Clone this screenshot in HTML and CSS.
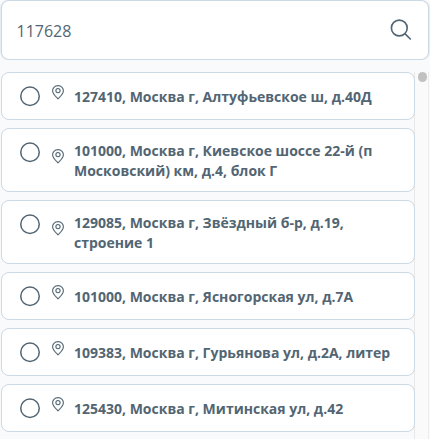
FILE: index.html
```html
<!DOCTYPE html>
<html lang="ru">
<head>
<meta charset="utf-8">
<title>Адреса</title>
<link rel="stylesheet" href="styles.css">
</head>
<body>
<svg class="defs" width="0" height="0">
  <symbol id="radio" viewBox="0 0 20 20"><circle cx="10" cy="10.300" r="9.250"/></symbol>
  <symbol id="pin" viewBox="0 0 12 15">
    <path d="M6 .6C3 .6.6 3 .6 5.8.6 9 3.600 11.500 6 13.800 8.400 11.500 11.400 9 11.400 5.800 11.400 3 9 .6 6 .6Z"/>
    <circle cx="6" cy="5.600" r="2.100"/>
  </symbol>
</svg>
<div class="search">
  <span class="query">117628</span>
  <svg class="search-icon" viewBox="0 0 22 22"><circle cx="9.300" cy="9" r="7.900"/><path d="M14.900 14.600 20.800 20.500"/></svg>
</div>
<div class="results">
  <div class="list">
    <label class="card"><svg class="radio"><use href="#radio"/></svg><svg class="pin"><use href="#pin"/></svg><span class="address">127410, Москва г, Алтуфьевское ш, д.40Д</span></label>
    <label class="card tall"><svg class="radio"><use href="#radio"/></svg><svg class="pin"><use href="#pin"/></svg><span class="address">101000, Москва г, Киевское шоссе 22-й (п<br>Московский) км, д.4, блок Г</span></label>
    <label class="card tall"><svg class="radio"><use href="#radio"/></svg><svg class="pin"><use href="#pin"/></svg><span class="address">129085, Москва г, Звёздный б-р, д.19,<br>строение 1</span></label>
    <label class="card"><svg class="radio"><use href="#radio"/></svg><svg class="pin"><use href="#pin"/></svg><span class="address">101000, Москва г, Ясногорская ул, д.7А</span></label>
    <label class="card"><svg class="radio"><use href="#radio"/></svg><svg class="pin"><use href="#pin"/></svg><span class="address">109383, Москва г, Гурьянова ул, д.2А, литер</span></label>
    <label class="card"><svg class="radio"><use href="#radio"/></svg><svg class="pin"><use href="#pin"/></svg><span class="address">125430, Москва г, Митинская ул, д.42</span></label>
  </div>
  <div class="scrollbar"><div class="thumb"></div></div>
</div>
</body>
</html>
```

FILE: styles.css
```css
* { box-sizing: border-box; }
body {
  margin: 0;
  height: 439px;
  overflow: hidden;
  display: flex;
  flex-direction: column;
  gap: 12px;
  padding-left: 1px;
  background: #f9fafc;
  color: #526573;
  font-family: "Open Sans", "Noto Sans", sans-serif;
}
.defs { position: absolute; }
.search {
  display: flex;
  flex: none;
  justify-content: space-between;
  align-items: center;
  width: 428px;
  height: 60px;
  padding: 0 16px 0 14.5px;
  border: 1px solid #cbd9e4;
  border-radius: 8px;
  background: #fff;
  box-shadow: -1px 0 #e6ecf1, 1px 0 #e6ecf1;
}
.query { font-size: 16px; line-height: 24px; padding-top: 1px; }
.search-icon {
  width: 22px;
  height: 22px;
  fill: none;
  stroke: #526573;
  stroke-width: 1.6;
}
.results { display: flex; flex: 1; min-height: 0; }
.list { display: flex; flex-direction: column; gap: 8px; width: 414px; flex: none; margin-right: -1px; z-index: 1; }
.card {
  display: flex;
  flex: none;
  align-items: flex-start;
  height: 48px;
  padding: 13px 0 0 18px;
  border: 1px solid #cbd9e4;
  border-radius: 8px;
  background: #fff;
}
.card.tall { height: 64px; }
.radio {
  flex: none;
  width: 20px;
  height: 20px;
  overflow: visible;
  fill: none;
  stroke: #526573;
  stroke-width: 1.5;
}
.radio use { overflow: visible; }
#radio { overflow: visible; }
.pin {
  flex: none;
  width: 12px;
  height: 15px;
  margin: -1px 10px 0 12px;
  fill: none;
  stroke: #526573;
  stroke-width: 1.1;
}
.tall .pin { margin-top: 7px; }
.address {
  margin-top: 1px;
  font-size: 14px;
  font-weight: 700;
  line-height: 20px;
  white-space: nowrap;
}
.tall .address { margin-top: -1px; }
.scrollbar {
  width: 15px;
  padding: 0 2px 0 3px;
  border-left: 1px solid #e8e8e8;
  border-right: 1px solid #ededed;
  background: #fafafa;
}
.thumb { height: 10px; width: 9px; border-radius: 4.5px; background: #c1c1c1; }
```
